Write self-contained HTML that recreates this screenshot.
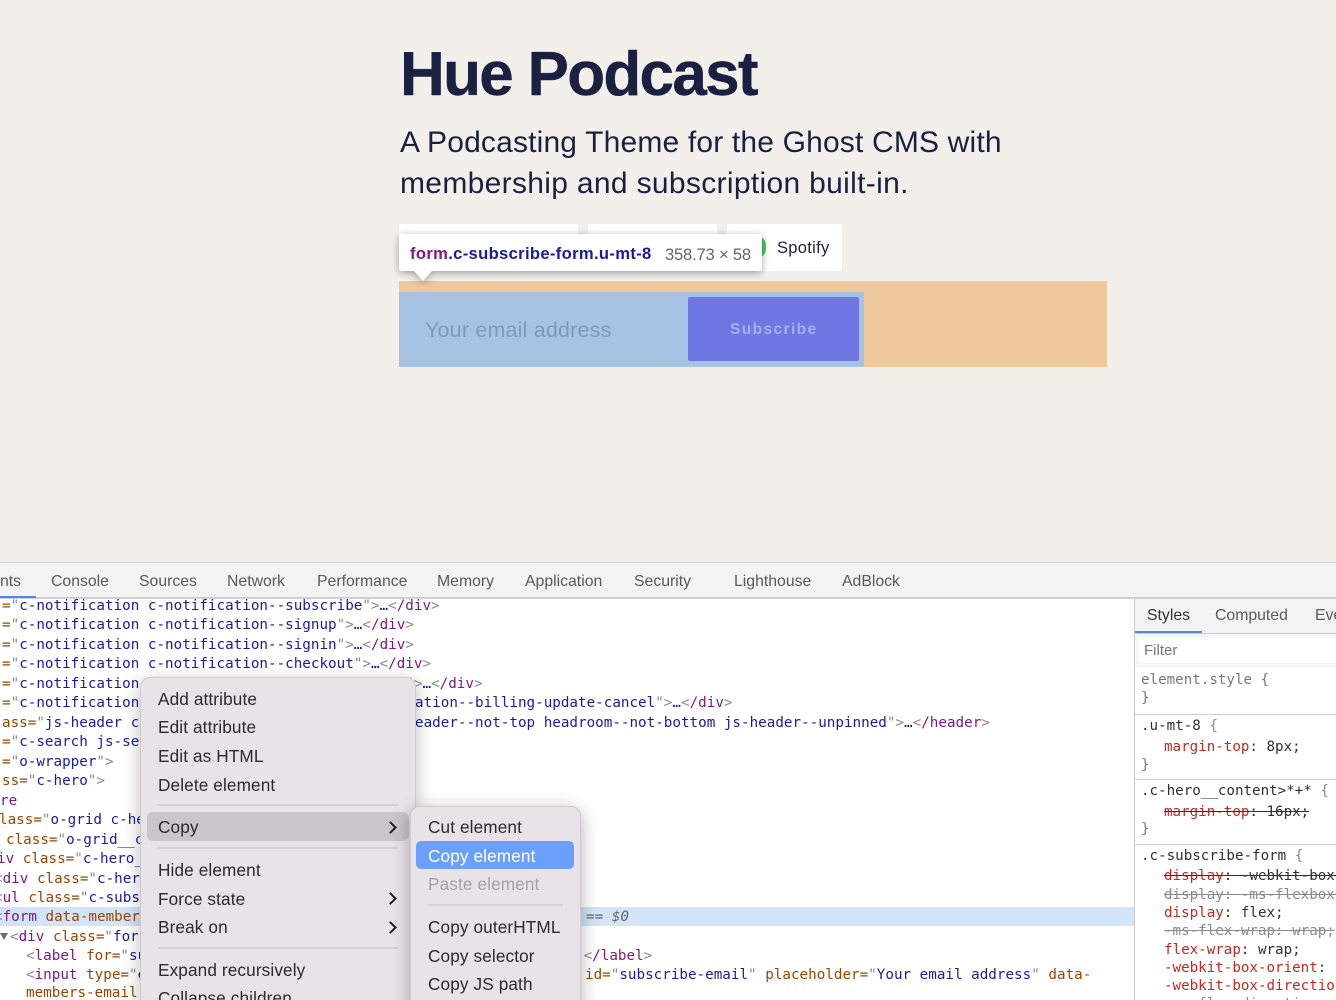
<!DOCTYPE html>
<html><head><meta charset="utf-8">
<style>
html,body{margin:0;padding:0;width:1336px;height:1000px;overflow:hidden}
#w{position:absolute;left:0;top:0;width:1336px;height:1000px;overflow:hidden;background:#f3f0ec;font-family:"Liberation Sans",sans-serif;filter:blur(.3px)}
#w div{position:absolute;white-space:pre}
.r{left:2px;height:19px;font:14.25px/19px "DejaVu Sans Mono","Liberation Mono",monospace;color:#1a1aa6;white-space:pre}
.t{color:#80187f}.a{color:#994500}.g{color:#8a8a8a}.v{color:#1a1aa6}
.tab{top:572px;font-size:15.8px;line-height:19px;color:#5a5a5a}
.m{font-size:17.2px;line-height:22px;color:#2b2a2c;letter-spacing:.12px}
.sep{height:2px;background:#d6d2d5}
.arrow{width:7px;height:7px;border-top:2px solid #222;border-right:2px solid #222;transform:rotate(45deg)}
.s{font:14.2px/18px "DejaVu Sans Mono","Liberation Mono",monospace;color:#303030;left:1141px}
.red{color:#c22a20}
.hr{left:1135px;width:201px;height:1px;background:#ccc}
</style></head><body><div id="w">

<div style="left:400px;top:36px;font-size:62px;line-height:78px;font-weight:700;letter-spacing:-1.7px;color:#1c2040;-webkit-text-stroke:.4px #1c2040">Hue Podcast</div>
<div style="left:400px;top:122px;font-size:30px;line-height:41px;color:#1c2040;letter-spacing:.17px">A Podcasting Theme for the Ghost CMS with</div>
<div style="left:400px;top:163px;font-size:30px;line-height:41px;color:#1c2040;letter-spacing:.32px">membership and subscription built-in.</div>

<div style="left:399px;top:224px;width:179px;height:47px;background:#fff;border-radius:2px"></div>
<div style="left:588px;top:224px;width:129px;height:47px;background:#fff;border-radius:2px"></div>
<div style="left:727px;top:224px;width:115px;height:47px;background:#fff;border-radius:2px"></div>
<div style="left:748px;top:236px;width:18px;height:22px;background:#4cc763;border-radius:11px"></div>
<div style="left:777px;top:238px;font-size:16.5px;line-height:21px;color:#1c2040;letter-spacing:.3px">Spotify</div>

<div style="left:399px;top:281px;width:708px;height:86px;background:#eec89b"></div>
<div style="left:399px;top:292px;width:465px;height:75px;background:#a6c3e3"></div>
<div style="left:688px;top:297px;width:171px;height:64px;background:#6f77e2;border-radius:2px"></div>
<div style="left:425px;top:316px;font-size:21.5px;line-height:28px;color:#7f9bbb;letter-spacing:.18px">Your email address</div>
<div style="left:730px;top:321px;font-size:15.5px;line-height:18px;font-weight:700;color:#a3b0ea;letter-spacing:1.4px">Subscribe</div>

<svg style="position:absolute;left:399px;top:234px;filter:drop-shadow(0 2px 4px rgba(0,0,0,.35))" width="370" height="52"><path d="M2 0H361a2 2 0 0 1 2 2V35a2 2 0 0 1-2 2H33L24 47L15 37H2a2 2 0 0 1-2-2V2a2 2 0 0 1 2-2Z" fill="#fff"/></svg>
<div style="left:410px;top:244px;font-size:16.6px;line-height:20px;font-weight:700;letter-spacing:.33px;color:#1a1a9c"><span style="color:#7f1a7c">form</span>.c-subscribe-form.u-mt-8</div>
<div style="left:665px;top:244px;font-size:16.6px;line-height:21px;color:#666;letter-spacing:-.2px">358.73 × 58</div>

<!-- devtools -->
<div style="left:0;top:562px;width:1336px;height:438px;background:#fff"></div>
<div style="left:0;top:562px;width:1336px;height:37px;background:#f3f3f3;border-top:1px solid #d0d0d0;border-bottom:2px solid #cfcfcf;box-sizing:border-box"></div>
<div style="left:0;top:596px;width:36px;height:2px;background:#4f86e0"></div>
<div class="tab" style="left:0">nts</div>
<div class="tab" style="left:51px">Console</div>
<div class="tab" style="left:139px">Sources</div>
<div class="tab" style="left:227px">Network</div>
<div class="tab" style="left:317px">Performance</div>
<div class="tab" style="left:437px">Memory</div>
<div class="tab" style="left:525px">Application</div>
<div class="tab" style="left:634px">Security</div>
<div class="tab" style="left:734px">Lighthouse</div>
<div class="tab" style="left:842px">AdBlock</div>

<div style="left:0;top:907px;width:1134px;height:19px;background:#d2e4f8"></div>

<div class="r" style="top:597px"><span class="a">=</span><span class="g">"</span>c-notification c-notification--subscribe<span class="g">"&gt;</span>…<span class="t"><span class="g">&lt;</span>/div<span class="g">&gt;</span></span></div>
<div class="r" style="top:616px"><span class="a">=</span><span class="g">"</span>c-notification c-notification--signup<span class="g">"&gt;</span>…<span class="t"><span class="g">&lt;</span>/div<span class="g">&gt;</span></span></div>
<div class="r" style="top:636px"><span class="a">=</span><span class="g">"</span>c-notification c-notification--signin<span class="g">"&gt;</span>…<span class="t"><span class="g">&lt;</span>/div<span class="g">&gt;</span></span></div>
<div class="r" style="top:655px"><span class="a">=</span><span class="g">"</span>c-notification c-notification--checkout<span class="g">"&gt;</span>…<span class="t"><span class="g">&lt;</span>/div<span class="g">&gt;</span></span></div>
<div class="r" style="top:675px"><span class="a">=</span><span class="g">"</span>c-notification c-notification--billing-update<span class="g">"&gt;</span>…<span class="t"><span class="g">&lt;</span>/div<span class="g">&gt;</span></span></div>
<div class="r" style="top:694px"><span class="a">=</span><span class="g">"</span>c-notification</div>
<div class="r" style="top:694px;left:415px">ation--billing-update-cancel<span class="g">"&gt;</span>…<span class="t"><span class="g">&lt;</span>/div<span class="g">&gt;</span></span></div>
<div class="r" style="top:714px"><span class="a">ass=</span><span class="g">"</span>js-header c</div>
<div class="r" style="top:714px;left:415px">eader--not-top headroom--not-bottom js-header--unpinned<span class="g">"&gt;</span>…<span class="t"><span class="g">&lt;</span>/header<span class="g">&gt;</span></span></div>
<div class="r" style="top:733px"><span class="a">=</span><span class="g">"</span>c-search js-se</div>
<div class="r" style="top:753px"><span class="a">=</span><span class="g">"</span>o-wrapper<span class="g">"&gt;</span></div>
<div class="r" style="top:772px"><span class="a">ss=</span><span class="g">"</span>c-hero<span class="g">"&gt;</span></div>
<div class="r" style="top:792px;left:0"><span class="t">re</span></div>
<div class="r" style="top:811px;left:-1px"><span class="a">lass=</span><span class="g">"</span>o-grid c-he</div>
<div class="r" style="top:831px;left:6px"><span class="a">class=</span><span class="g">"</span>o-grid__c</div>
<div class="r" style="top:850px;left:-3px"><span class="t">iv</span> <span class="a">class=</span><span class="g">"</span>c-hero_</div>
<div class="r" style="top:870px;left:-6px"><span class="g">&lt;</span><span class="t">div</span> <span class="a">class=</span><span class="g">"</span>c-her</div>
<div class="r" style="top:889px;left:-6px"><span class="g">&lt;</span><span class="t">ul</span> <span class="a">class=</span><span class="g">"</span>c-subs</div>
<div class="r" style="top:908px;left:-6px"><span class="g">&lt;</span><span class="t">form</span> <span class="a">data-member</span></div>
<div class="r" style="top:908px;left:586px;font-style:italic;color:#666">== $0</div>
<svg style="position:absolute;left:0;top:933px" width="8" height="8"><path d="M0 0H8L4 7Z" fill="#6e6e6e"/></svg>
<div class="r" style="top:928px;left:10px"><span class="g">&lt;</span><span class="t">div</span> <span class="a">class=</span><span class="g">"</span>forn</div>
<div class="r" style="top:947px;left:26px"><span class="g">&lt;</span><span class="t">label</span> <span class="a">for=</span><span class="g">"</span>su</div>
<div class="r" style="top:947px;left:575px"><span class="g">.&lt;</span><span class="t">/label</span><span class="g">&gt;</span></div>
<div class="r" style="top:966px;left:26px"><span class="g">&lt;</span><span class="t">input</span> <span class="a">type=</span><span class="g">"</span>e</div>
<div class="r" style="top:966px;left:585px"><span class="a">id=</span><span class="g">"</span>subscribe-email<span class="g">"</span> <span class="a">placeholder=</span><span class="g">"</span>Your email address<span class="g">"</span> <span class="a">data-</span></div>
<div class="r" style="top:984px;left:26px"><span class="a">members-email</span></div>

<!-- styles pane -->
<div style="left:1134px;top:599px;width:202px;height:401px;background:#fff;border-left:1px solid #ccc;box-sizing:border-box"></div>
<div style="left:1135px;top:599px;width:201px;height:35px;background:#f3f3f3;border-bottom:1px solid #ccc;box-sizing:border-box"></div>
<div style="left:1135px;top:631px;width:67px;height:2px;background:#4f86e0"></div>
<div class="tab" style="left:1147px;top:606px;color:#333">Styles</div>
<div class="tab" style="left:1215px;top:606px">Computed</div>
<div class="tab" style="left:1315px;top:606px">Eve</div>
<div style="left:1135px;top:634px;width:201px;height:33px;background:#f6f6f6"></div>
<div style="left:1139px;top:638px;width:197px;height:25px;background:#fff"></div>
<div style="left:1144px;top:641px;font-size:15px;line-height:19px;color:#777">Filter</div>
<div class="s" style="top:671px;color:#777">element.style {
<span>}</span></div>
<div class="hr" style="top:714px"></div>
<div class="s" style="top:717px">.u-mt-8 <span class="g">{</span></div>
<div class="s" style="top:738px;left:1164px"><span class="red">margin-top</span>: 8px;</div>
<div class="s" style="top:756px;color:#777">}</div>
<div class="hr" style="top:779px"></div>
<div class="s" style="top:782px">.c-hero__content&gt;*+* <span class="g">{</span></div>
<div class="s" style="top:803px;left:1164px;text-decoration:line-through"><span class="red">margin-top</span>: 16px;</div>
<div class="s" style="top:820px;color:#777">}</div>
<div class="hr" style="top:844px"></div>
<div class="s" style="top:847px">.c-subscribe-form <span class="g">{</span></div>
<div class="s" style="top:867px;left:1164px;text-decoration:line-through"><span class="red">display</span>: -webkit-box;</div>
<div class="s" style="top:886px;left:1164px;text-decoration:line-through;color:#8a8a8a">display: -ms-flexbox;</div>
<div class="s" style="top:904px;left:1164px"><span class="red">display</span>: flex;</div>
<div class="s" style="top:922px;left:1164px;text-decoration:line-through;color:#8a8a8a">-ms-flex-wrap: wrap;</div>
<div class="s" style="top:941px;left:1164px"><span class="red">flex-wrap</span>: wrap;</div>
<div class="s" style="top:959px;left:1164px"><span class="red">-webkit-box-orient</span>:</div>
<div class="s" style="top:977px;left:1164px"><span class="red">-webkit-box-direction</span></div>
<div class="s" style="top:995px;left:1164px;text-decoration:line-through;color:#8a8a8a">-ms-flex-direction:</div>

<!-- context menu -->
<div style="left:140px;top:677px;width:276px;height:340px;background:#e8e3e6;border:1px solid #cfcbce;box-sizing:border-box;border-radius:10px;box-shadow:0 4px 18px rgba(0,0,0,.25)"></div>
<div class="m" style="left:158px;top:688px">Add attribute</div>
<div class="m" style="left:158px;top:716px">Edit attribute</div>
<div class="m" style="left:158px;top:745px">Edit as HTML</div>
<div class="m" style="left:158px;top:774px">Delete element</div>
<div class="sep" style="left:158px;top:804px;width:240px"></div>
<div style="left:147px;top:812px;width:262px;height:29px;background:#c9c5c8;border-radius:6px"></div>
<div class="m" style="left:158px;top:816px">Copy</div>
<div class="arrow" style="left:386px;top:823px"></div>
<div class="sep" style="left:158px;top:847px;width:240px"></div>
<div class="m" style="left:158px;top:859px">Hide element</div>
<div class="m" style="left:158px;top:888px">Force state</div>
<div class="arrow" style="left:386px;top:894px"></div>
<div class="m" style="left:158px;top:916px">Break on</div>
<div class="arrow" style="left:386px;top:923px"></div>
<div class="sep" style="left:158px;top:947px;width:240px"></div>
<div class="m" style="left:158px;top:959px">Expand recursively</div>
<div class="m" style="left:158px;top:987px">Collapse children</div>

<!-- submenu -->
<div style="left:410px;top:806px;width:171px;height:220px;background:#e8e3e6;border:1px solid #cfcbce;box-sizing:border-box;border-radius:10px;box-shadow:0 4px 18px rgba(0,0,0,.3)"></div>
<div class="m" style="left:428px;top:816px">Cut element</div>
<div style="left:416px;top:841px;width:158px;height:28px;background:#6aa0fa;border-radius:5px"></div>
<div class="m" style="left:428px;top:845px;color:#fff">Copy element</div>
<div class="m" style="left:428px;top:873px;color:#a5a2a4">Paste element</div>
<div class="sep" style="left:428px;top:904px;width:135px"></div>
<div class="m" style="left:428px;top:916px">Copy outerHTML</div>
<div class="m" style="left:428px;top:945px">Copy selector</div>
<div class="m" style="left:428px;top:973px">Copy JS path</div>
</div></body></html>
